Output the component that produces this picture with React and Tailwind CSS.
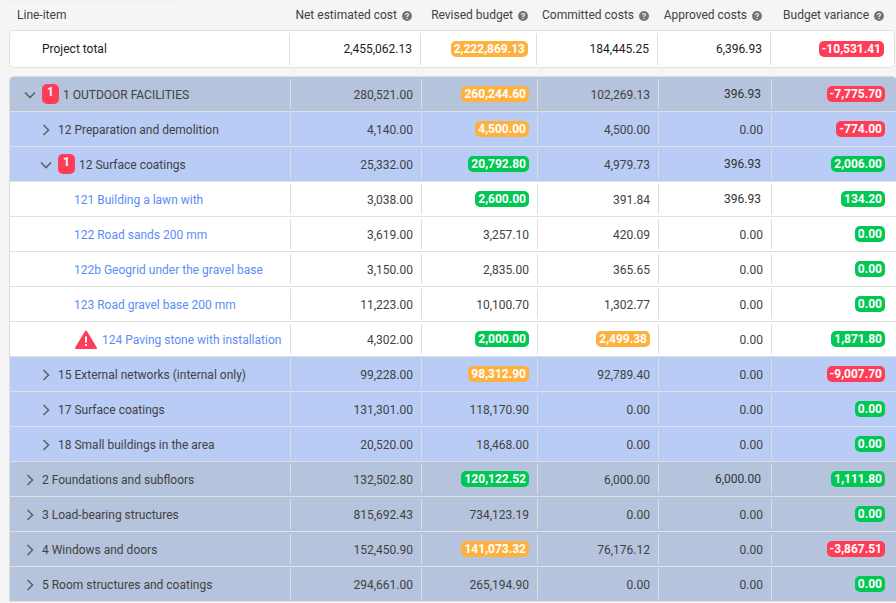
import React from "react";

const cols = "grid grid-cols-[280px_131px_116px_121px_113px_125px]";

function Help() {
  return (
    <svg viewBox="0 0 10 10" className="w-[10px] h-[10px] shrink-0 ml-[5px] mt-[1px]">
      <circle cx="5" cy="5" r="5" fill="#757575" />
      <path d="M3.6 4 C3.6 2 6.5 2.2 6.4 3.8 C6.3 4.8 5 4.8 5 6" fill="none" stroke="#f5f5f5" strokeWidth="1.1" />
      <circle cx="5" cy="7.4" r="0.7" fill="#f5f5f5" />
    </svg>
  );
}

function Chevron({ open }) {
  return (
    <svg viewBox="0 0 12 12" className="w-[12px] h-[12px] shrink-0 mt-[2px]" fill="none" stroke="#5f6368" strokeWidth="1.6">
      {open ? <path d="M1 3.5 L6 8.5 L11 3.5" /> : <path d="M3.5 1 L8.5 6 L3.5 11" />}
    </svg>
  );
}

function Pill({ v, c }) {
  const bg = c === "o" ? "bg-[#ffb13d]" : c === "r" ? "bg-[#ff3d57]" : "bg-[#00c853]";
  return (
    <span className={`${bg} text-white font-bold rounded-[5px] h-[16px] leading-[16px] px-[3px] inline-block`}>{v}</span>
  );
}

function Cell({ children, last, total }) {
  const pr = total ? (last ? "pr-[10px]" : "pr-[8px]") : last ? "pr-[11px]" : "pr-[8px]";
  return (
    <div className={`flex items-center justify-end ${pr} relative`}>
      <span className="absolute left-0 top-[2px] bottom-[2px] w-px bg-[#dedede]" />
      {children}
    </div>
  );
}

const Val = ({ d, strong }) => {
  if (Array.isArray(d)) return <Pill v={d[0]} c={d[1]} />;
  if (strong) return <span className="text-[#333333] mr-[2px]">{d}</span>;
  return <span className="mt-[2px]">{d}</span>;
};

const rows = [
  ["t", "1 OUTDOOR FACILITIES", true, 1, ["280,521.00", ["260,244.60", "o"], "102,269.13", "396.93", ["-7,775.70", "r"]]],
  ["m", "12 Preparation and demolition", false, 0, ["4,140.00", ["4,500.00", "o"], "4,500.00", "0.00", ["-774.00", "r"]]],
  ["m", "12 Surface coatings", true, 1, ["25,332.00", ["20,792.80", "g"], "4,979.73", "396.93", ["2,006.00", "g"]]],
  ["l", "121 Building a lawn with", false, 0, ["3,038.00", ["2,600.00", "g"], "391.84", "396.93", ["134.20", "g"]]],
  ["l", "122 Road sands 200 mm", false, 0, ["3,619.00", "3,257.10", "420.09", "0.00", ["0.00", "g"]]],
  ["l", "122b Geogrid under the gravel base", false, 0, ["3,150.00", "2,835.00", "365.65", "0.00", ["0.00", "g"]]],
  ["l", "123 Road gravel base 200 mm", false, 0, ["11,223.00", "10,100.70", "1,302.77", "0.00", ["0.00", "g"]]],
  ["w", "124 Paving stone with installation", false, 0, ["4,302.00", ["2,000.00", "g"], ["2,499.38", "o"], "0.00", ["1,871.80", "g"]]],
  ["m", "15 External networks (internal only)", false, 0, ["99,228.00", ["98,312.90", "o"], "92,789.40", "0.00", ["-9,007.70", "r"]]],
  ["m", "17 Surface coatings", false, 0, ["131,301.00", "118,170.90", "0.00", "0.00", ["0.00", "g"]]],
  ["m", "18 Small buildings in the area", false, 0, ["20,520.00", "18,468.00", "0.00", "0.00", ["0.00", "g"]]],
  ["t", "2 Foundations and subfloors", false, 0, ["132,502.80", ["120,122.52", "g"], "6,000.00", "6,000.00", ["1,111.80", "g"]]],
  ["t", "3 Load-bearing structures", false, 0, ["815,692.43", "734,123.19", "0.00", "0.00", ["0.00", "g"]]],
  ["t", "4 Windows and doors", false, 0, ["152,450.90", ["141,073.32", "o"], "76,176.12", "0.00", ["-3,867.51", "r"]]],
  ["t", "5 Room structures and coatings", false, 0, ["294,661.00", "265,194.90", "0.00", "0.00", ["0.00", "g"]]],
];

function Name({ kind, label, open, badge }) {
  const pad = kind === "t" ? "pl-[14px]" : kind === "m" ? "pl-[30px]" : kind === "l" ? "pl-[64px]" : "pl-[65px]";
  return (
    <div className={`flex items-center ${pad} whitespace-nowrap overflow-hidden`}>
      {kind === "t" || kind === "m" ? <Chevron open={open} /> : null}
      {kind === "w" ? (
        <svg viewBox="0 0 22 19" className="w-[22px] h-[19px] shrink-0 mr-[5px] mt-[1px]">
          <path d="M11 1.5 L21 18 L1 18 Z" fill="#ff3d57" stroke="#ff3d57" strokeWidth="2" strokeLinejoin="round" />
          <rect x="10" y="6.5" width="2" height="6" fill="#fff" />
          <rect x="10" y="14" width="2" height="2" fill="#fff" />
        </svg>
      ) : null}
      {badge ? (
        <span className="ml-[6px] mr-[4px] w-[17px] h-[20px] rounded-[5px] bg-[#ff3d57] text-white font-bold text-[12px] leading-[17px] text-center shrink-0">1</span>
      ) : !open && (kind === "t" || kind === "m") ? <span className="w-[6px]" /> : null}
      <span className={`mt-[2px] ${kind === "l" || kind === "w" ? "text-[#5c8df6]" : ""}`}>{label}</span>
    </div>
  );
}

export default function App() {
  return (
    <div className="relative w-[896px] h-[603px] overflow-hidden bg-[#f5f5f5] text-[12px] text-[#424242] font-['Roboto',sans-serif]">
      <div className="absolute left-[10px] top-0 w-[168px] h-[2px] rounded-b-[2px] bg-[#eef1f5]" />
      <div className={`${cols} h-[30px] ml-[10px] items-center text-[#424242]`}>
        <div className="pl-[7px]">Line-item</div>
        <div className="flex items-center justify-end pr-[9px]">Net estimated cost<Help /></div>
        <div className="flex items-center justify-end pr-[9px]">Revised budget<Help /></div>
        <div className="flex items-center justify-end pr-[9px]">Committed costs<Help /></div>
        <div className="flex items-center justify-end pr-[9px]">Approved costs<Help /></div>
        <div className="flex items-center justify-end pr-[12px]">Budget variance<Help /></div>
      </div>

      <div className="ml-[9px] w-[886px] h-[38px] bg-white border border-[#e0e0e0] rounded-[5px] grid grid-cols-[279px_131px_116px_121px_113px_124px] text-[#212121]">
        <div className="flex items-center pl-[32px]">Project total</div>
        <Cell total><span>2,455,062.13</span></Cell>
        <Cell total><Pill v="2,222,869.13" c="o" /></Cell>
        <Cell total><span>184,445.25</span></Cell>
        <Cell total><span>6,396.93</span></Cell>
        <Cell total last><Pill v="-10,531.41" c="r" /></Cell>
      </div>

      <div className="ml-[9px] mt-[8px] w-[888px] border-l border-t border-[#dcdcdc] rounded-t-[5px] overflow-hidden">
        {rows.map(([kind, label, open, badge, vals], i) => (
          <div
            key={i}
            className={`${cols} h-[35px] border-b border-[#e0e0e0] ${
              kind === "t" ? "bg-[#b5c3dc]" : kind === "m" ? "bg-[#b9ccf5]" : "bg-white"
            }`}
          >
            <Name kind={kind} label={label} open={open} badge={badge} />
            {vals.map((d, j) => (
              <Cell key={j} last={j === 4}><Val d={d} strong={j === 3 && d !== "0.00"} /></Cell>
            ))}
          </div>
        ))}
      </div>
    </div>
  );
}
